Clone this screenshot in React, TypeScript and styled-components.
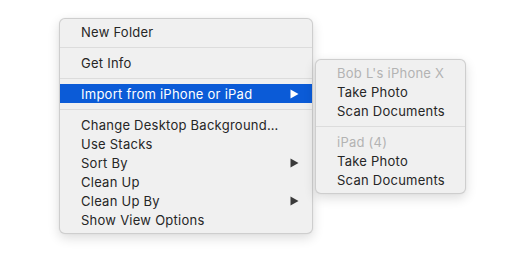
import React from "react";
import styled, { createGlobalStyle } from "styled-components";

const Global = createGlobalStyle`
  html, body { margin: 0; padding: 0; background: #ffffff; }
  body { font-family: "Inter", "Liberation Sans", sans-serif; -webkit-font-smoothing: antialiased; }
`;

const Page = styled.div`
  display: flex;
  align-items: flex-start;
  gap: 2px;
  padding: 18px 0 0 59px;
  width: 521px;
  height: 261px;
  box-sizing: border-box;
`;

const Menu = styled.div<{ $width: number; $offset?: number }>`
  width: ${(p) => p.$width}px;
  margin-top: ${(p) => p.$offset ?? 0}px;
  box-sizing: border-box;
  background: #f0f0f0;
  border: 1px solid rgba(0, 0, 0, 0.14);
  border-radius: 6px;
  padding: 3px 0 4px;
  box-shadow: 0 4px 12px rgba(0, 0, 0, 0.14), 0 0 2px rgba(0, 0, 0, 0.06);
  display: flex;
  flex-direction: column;
  overflow: hidden;
`;

const Row = styled.div<{ $active?: boolean; $disabled?: boolean }>`
  height: 19px;
  display: flex;
  align-items: center;
  justify-content: space-between;
  padding: 0 13px 0 21px;
  font-size: 13px;
  letter-spacing: 0.25px;
  color: ${(p) => (p.$active ? "#ffffff" : p.$disabled ? "#b3b3b3" : "#262626")};
  background: ${(p) => (p.$active ? "#0b5bd7" : "transparent")};
  white-space: nowrap;
`;

const Separator = styled.div`
  height: 12px;
  display: flex;
  align-items: center;
  &::after {
    content: "";
    flex: 1;
    height: 1px;
    background: #dcdcdc;
  }
`;

const Arrow = styled.svg`
  width: 9px;
  height: 10px;
  display: block;
`;

const Chevron = ({ color }: { color: string }) => (
  <Arrow viewBox="0 0 9 10">
    <polygon points="0.5,0.5 8.5,5 0.5,9.5" fill={color} />
  </Arrow>
);

type Item = { label?: string; sep?: boolean; sub?: boolean; active?: boolean; disabled?: boolean };

const mainItems: Item[] = [
  { label: "New Folder" },
  { sep: true },
  { label: "Get Info" },
  { sep: true },
  { label: "Import from iPhone or iPad", sub: true, active: true },
  { sep: true },
  { label: "Change Desktop Background…" },
  { label: "Use Stacks" },
  { label: "Sort By", sub: true },
  { label: "Clean Up" },
  { label: "Clean Up By", sub: true },
  { label: "Show View Options" },
];

const subItems: Item[] = [
  { label: "Bob L's iPhone X", disabled: true },
  { label: "Take Photo" },
  { label: "Scan Documents" },
  { sep: true },
  { label: "iPad (4)", disabled: true },
  { label: "Take Photo" },
  { label: "Scan Documents" },
];

const renderItems = (items: Item[]) =>
  items.map((it, i) =>
    it.sep ? (
      <Separator key={i} />
    ) : (
      <Row key={i} $active={it.active} $disabled={it.disabled}>
        <span>{it.label}</span>
        {it.sub && <Chevron color={it.active ? "#ffffff" : "#3a3a3a"} />}
      </Row>
    )
  );

export default function App() {
  return (
    <>
      <Global />
      <Page>
        <Menu $width={254}>{renderItems(mainItems)}</Menu>
        <Menu $width={151} $offset={41}>{renderItems(subItems)}</Menu>
      </Page>
    </>
  );
}
